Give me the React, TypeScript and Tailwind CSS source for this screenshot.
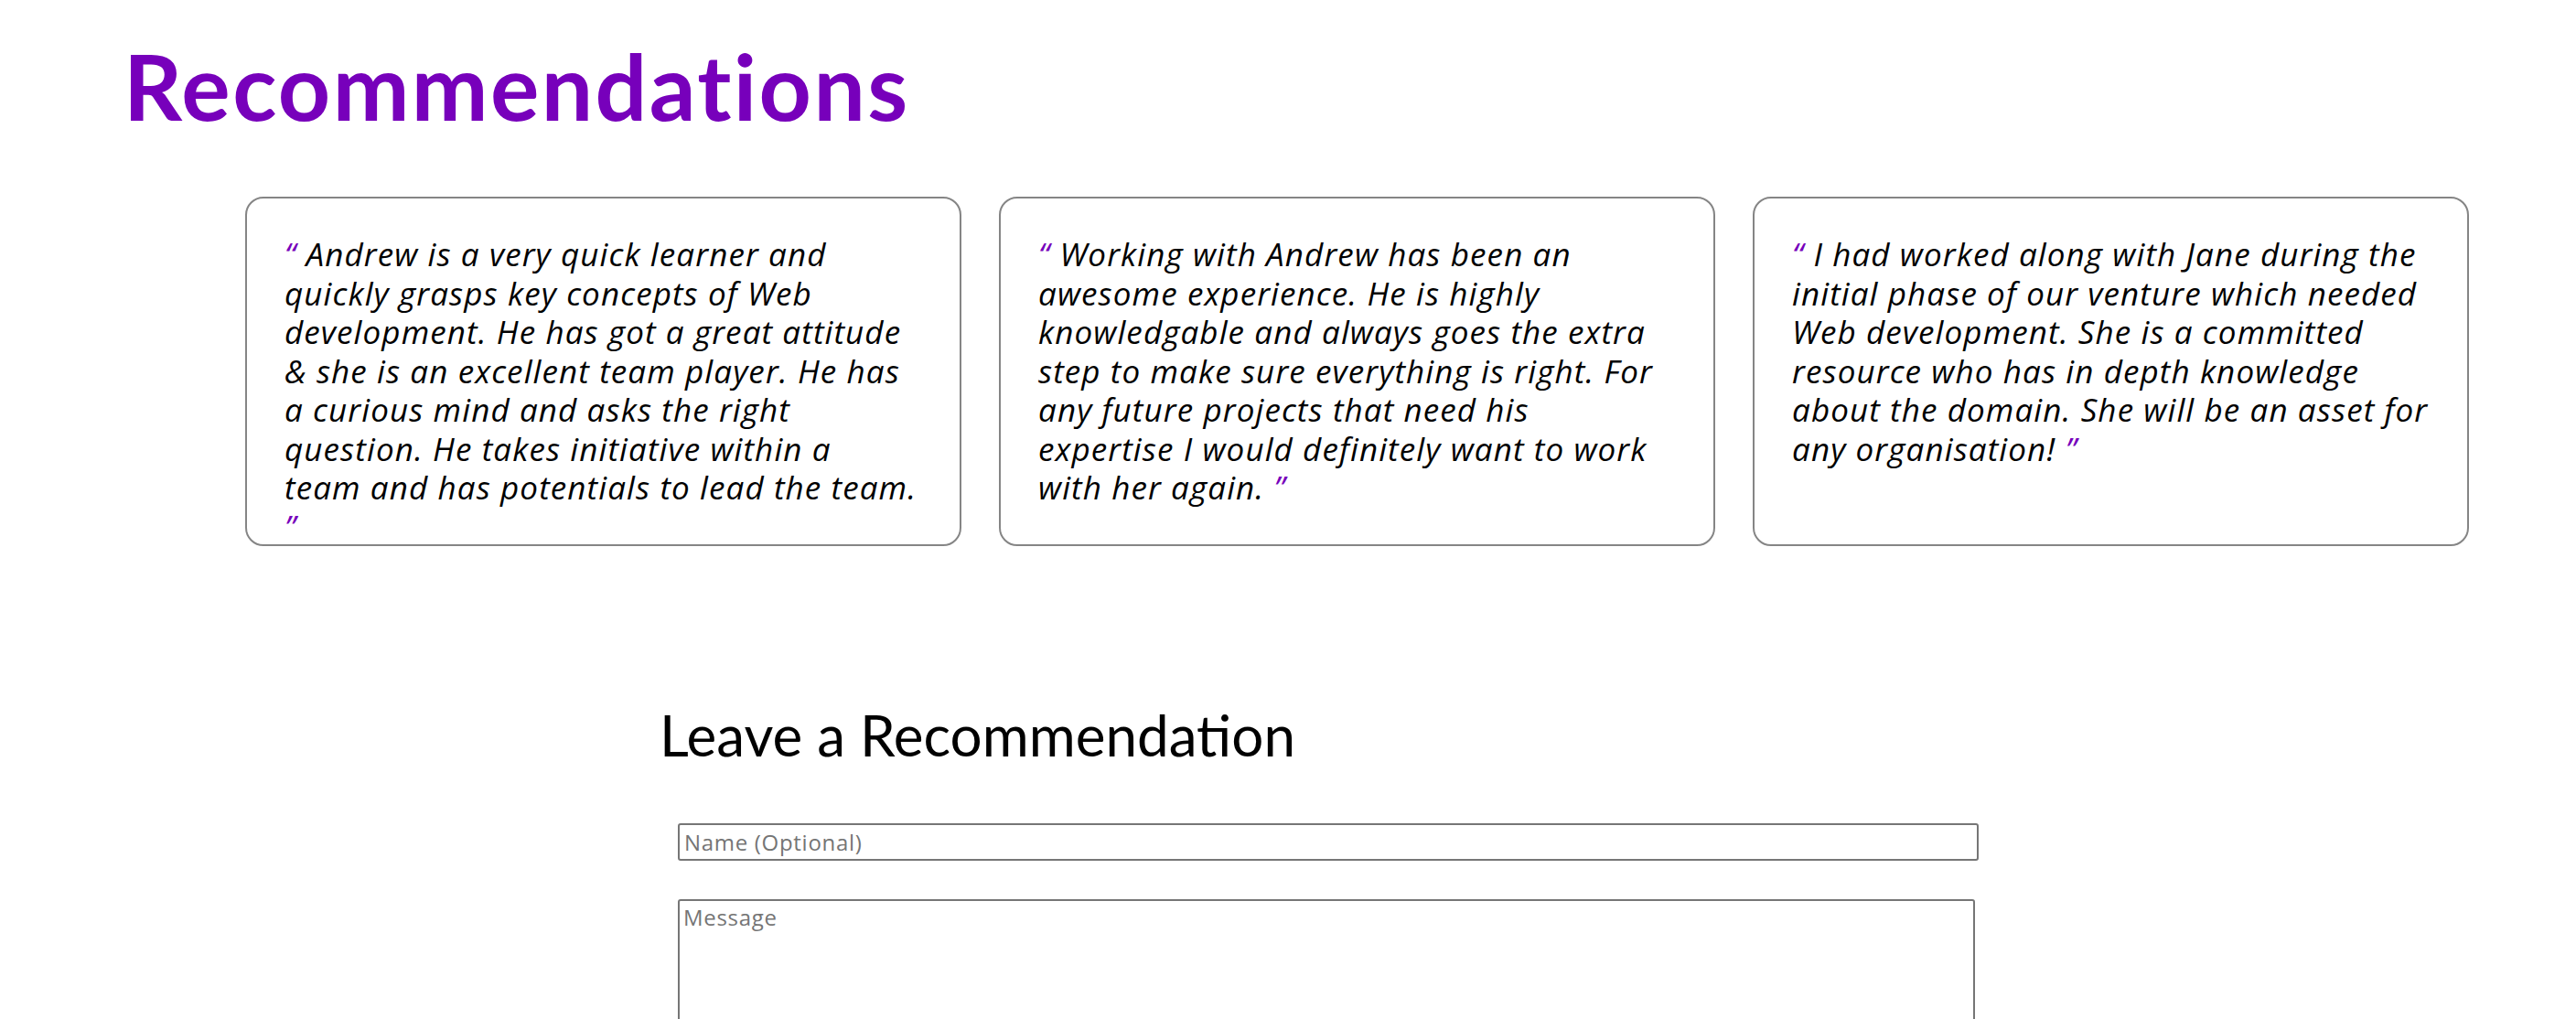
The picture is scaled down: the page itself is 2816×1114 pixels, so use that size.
import React from 'react';

// lines kept as in the original layout
const recommendations: string[][] = [
  [
    'Andrew is a very quick learner and',
    'quickly grasps key concepts of Web',
    'development. He has got a great attitude',
    '& she is an excellent team player. He has',
    'a curious mind and asks the right',
    'question. He takes initiative within a',
    'team and has potentials to lead the team.',
    '',
  ],
  [
    'Working with Andrew has been an',
    'awesome experience. He is highly',
    'knowledgable and always goes the extra',
    'step to make sure everything is right. For',
    'any future projects that need his',
    'expertise I would definitely want to work',
    'with her again.',
  ],
  [
    'I had worked along with Jane during the',
    'initial phase of our venture which needed',
    'Web development. She is a committed',
    'resource who has in depth knowledge',
    'about the domain. She will be an asset for',
    'any organisation!',
  ],
];

const Quote: React.FC<{ lines: string[] }> = ({ lines }) => (
  <p className="italic text-[35px] leading-[42.5px] tracking-[1.1px] font-['Open_Sans',sans-serif]">
    {lines.map((line, j) => {
      const first = j === 0;
      const last = j === lines.length - 1;
      return (
        <span key={j} className="block whitespace-nowrap">
          {first && <span className="text-[#7700bb]">&ldquo; </span>}
          {line}
          {last && (
            <span className="text-[#7700bb]">
              {line ? ' ' : ''}&rdquo;
            </span>
          )}
        </span>
      );
    })}
  </p>
);

const App: React.FC = () => {
  return (
    <div className="min-h-screen bg-white text-black font-['Lato','Open_Sans',sans-serif]">
      <h1 className="ml-[135px] pt-[43px] text-[100px] leading-none font-bold tracking-[2.4px] text-[#7700bb]">
        Recommendations
      </h1>

      {/* recommendation cards */}
      <div className="mt-[72px] ml-[268px] flex gap-[41px]">
        {recommendations.map((lines, i) => (
          <div
            key={i}
            className="w-[783px] h-[382px] shrink-0 rounded-[20px] border-2 border-[#858585] pt-[40px] pl-[41px] pr-[38px]"
          >
            <Quote lines={lines} />
          </div>
        ))}
      </div>

      {/* form */}
      <div className="mt-[175px] ml-[721px]">
        <h2 className="text-[62px] leading-none font-normal">Leave a Recommendation</h2>
        <form className="mt-[66px] ml-[20px] flex flex-col gap-[42px] font-['Open_Sans',sans-serif]">
          <input
            type="text"
            placeholder="Name (Optional)"
            className="w-[1422px] h-[41px] px-[5px] border-2 border-[#767676] rounded-[3px] text-[24px] tracking-[0.7px] placeholder:text-[#757575] outline-none"
          />
          <textarea
            placeholder="Message"
            className="w-[1418px] h-[220px] px-[4px] pt-[4px] border-2 border-[#767676] rounded-[3px] text-[24px] tracking-[0.7px] leading-[1.2] placeholder:text-[#757575] outline-none resize-none"
          />
        </form>
      </div>
    </div>
  );
};

export default App;
